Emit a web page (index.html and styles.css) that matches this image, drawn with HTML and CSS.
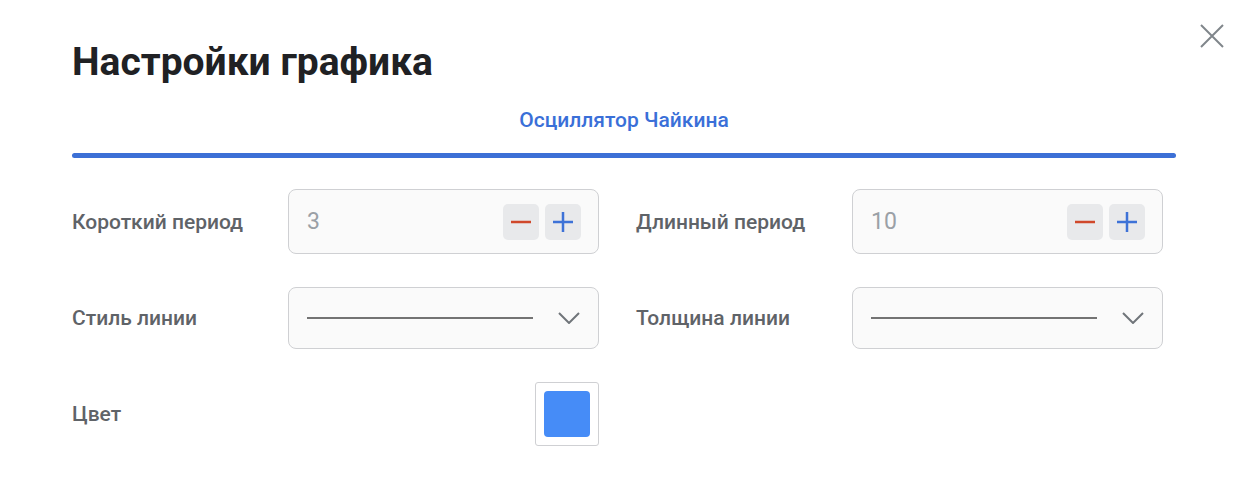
FILE: index.html
```html
<!DOCTYPE html>
<html lang="ru">
<head>
<meta charset="utf-8">
<title>Настройки графика</title>
<link rel="stylesheet" href="styles.css">
</head>
<body>
<div class="dialog">
  <button class="close" aria-label="Закрыть">
    <svg width="26" height="26" viewBox="0 0 26 26"><path d="M2 2 L24 24 M24 2 L2 24" stroke="#80868b" stroke-width="2" fill="none"/></svg>
  </button>
  <h1 class="title">Настройки графика</h1>
  <div class="tabs">
    <div class="tab active">Осциллятор Чайкина</div>
  </div>
  <div class="tab-bar"></div>
  <div class="form">
    <div class="field">
      <div class="label">Короткий период</div>
      <div class="input stepper">
        <span class="value">3</span>
        <div class="btns">
          <button class="btn"><svg width="20" height="20" viewBox="0 0 20 20"><path d="M0 10 H20" stroke="#d0482b" stroke-width="2.5"/></svg></button>
          <button class="btn"><svg width="20" height="20" viewBox="0 0 20 20"><path d="M0 10 H20 M10 0 V20" stroke="#3d72d7" stroke-width="2.5"/></svg></button>
        </div>
      </div>
    </div>
    <div class="field">
      <div class="label">Длинный период</div>
      <div class="input stepper">
        <span class="value">10</span>
        <div class="btns">
          <button class="btn"><svg width="20" height="20" viewBox="0 0 20 20"><path d="M0 10 H20" stroke="#d0482b" stroke-width="2.5"/></svg></button>
          <button class="btn"><svg width="20" height="20" viewBox="0 0 20 20"><path d="M0 10 H20 M10 0 V20" stroke="#3d72d7" stroke-width="2.5"/></svg></button>
        </div>
      </div>
    </div>
    <div class="field">
      <div class="label">Стиль линии</div>
      <div class="input select">
        <span class="line"></span>
        <svg class="chev" width="22" height="12" viewBox="0 0 22 12"><path d="M1 1 L11 11 L21 1" stroke="#70757a" stroke-width="2" fill="none"/></svg>
      </div>
    </div>
    <div class="field">
      <div class="label">Толщина линии</div>
      <div class="input select">
        <span class="line"></span>
        <svg class="chev" width="22" height="12" viewBox="0 0 22 12"><path d="M1 1 L11 11 L21 1" stroke="#70757a" stroke-width="2" fill="none"/></svg>
      </div>
    </div>
    <div class="field">
      <div class="label">Цвет</div>
      <div class="color-cell">
        <div class="swatch-box"><div class="swatch"></div></div>
      </div>
    </div>
  </div>
</div>
</body>
</html>
```

FILE: styles.css
```css
* { box-sizing: border-box; }
html, body { margin: 0; padding: 0; background: #fff; }
body { font-family: Roboto, "Noto Sans", sans-serif; }

.dialog {
  position: relative;
  width: 1248px;
  height: 488px;
  padding: 36px 72px 0 72px;
}

.close {
  position: absolute;
  top: 23px;
  right: 23px;
  width: 26px;
  height: 26px;
  padding: 0;
  border: 0;
  background: none;
  display: flex;
}

.title {
  margin: 0;
  font-size: 39px;
  font-weight: 700;
  line-height: 52px;
  color: #202124;
}

.tabs {
  display: flex;
  justify-content: center;
  margin-top: 20px;
}
.tab {
  font-size: 21px;
  font-weight: 500;
  line-height: 24px;
  color: #3a6fd8;
}
.tab-bar {
  margin-top: 21px;
  height: 5px;
  border-radius: 3px;
  background: #3c70d6;
}

.form {
  display: grid;
  grid-template-columns: 564px 540px;
  row-gap: 32px;
  margin-top: 31px;
}
.field {
  display: flex;
  align-items: center;
  min-height: 64px;
}
.label {
  width: 216px;
  font-size: 21px;
  font-weight: 500;
  color: #5f6368;
}
.input {
  width: 311px;
  height: 65px;
  border: 1px solid #cfd0d3;
  border-radius: 8px;
  background: #fafafa;
  display: flex;
  align-items: center;
}
.stepper { padding: 0 17px 0 18px; justify-content: space-between; }
.value { font-size: 23px; color: #9aa0a6; }
.btns { display: flex; gap: 6px; }
.btn {
  width: 36px;
  height: 36px;
  padding: 0;
  border: 0;
  border-radius: 5px;
  background: #e8e9eb;
  display: flex;
  align-items: center;
  justify-content: center;
}

.select { height: 62px; padding: 0 18px 0 18px; }
.line { width: 226px; height: 2px; background: #737373; }
.chev { margin-left: auto; }

.color-cell { width: 311px; display: flex; justify-content: flex-end; }
.swatch-box {
  width: 64px;
  height: 64px;
  border: 1px solid #cfd0d3;
  border-radius: 3px;
  display: flex;
  align-items: center;
  justify-content: center;
}
.swatch {
  width: 46px;
  height: 46px;
  border-radius: 4px;
  background: #468cf7;
}
```
